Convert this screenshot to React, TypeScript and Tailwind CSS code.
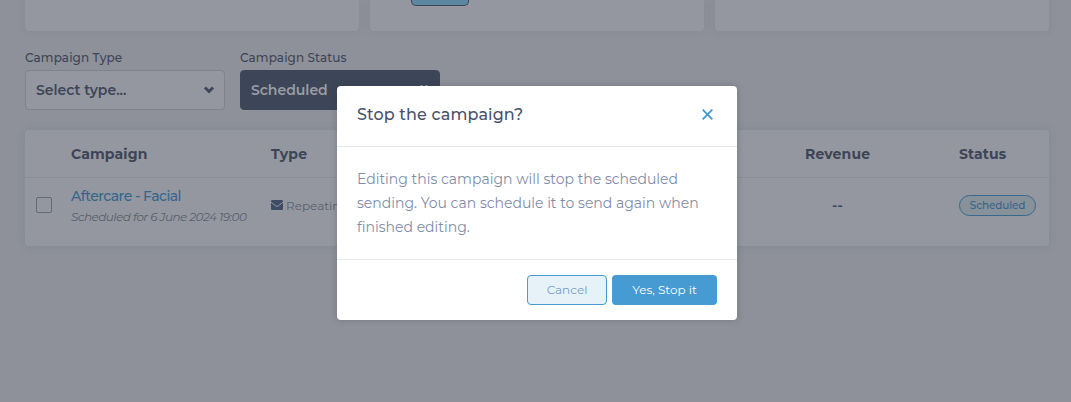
import React from 'react'
import classNames from 'clsx'

interface SelectProps {
    label: string;
    value: string;
    dark?: boolean;
}

interface Campaign {
    name: string;
    note: string;
    type: string;
    revenue: string;
    status: string;
}

const campaigns: Campaign[] = [
    {
        name: 'Aftercare - Facial',
        note: 'Scheduled for 6 June 2024 19:00',
        type: 'Repeating',
        revenue: '--',
        status: 'Scheduled',
    },
]

function Chevron() {
    return (
        <svg className='h-[8px] w-[10px]' viewBox='0 0 10 8' fill='currentColor'>
            <path d='M0 2.4 1.9.5 5 3.6 8.1.5 10 2.4 5 7.4z' />
        </svg>
    )
}

function Clear() {
    return (
        <svg className='h-[11px] w-[10px]' viewBox='0 0 10 11' fill='none' stroke='currentColor' strokeWidth='2.4'>
            <path d='M2 .2 8 10.8M8 .2 2 10.8' />
        </svg>
    )
}

function Select({ label, value, dark }: SelectProps) {
    return (
        <div className='w-[200px]'>
            <label className='block h-[20px] whitespace-nowrap text-[12px] font-medium leading-[16px] tracking-[0.1px] text-[#3d4457]'>{label}</label>
            <div className={classNames(
                'flex h-[40px] items-center justify-between rounded-[4px] border pl-[10px] pr-[10px] text-[14px] font-semibold',
                dark ? 'border-[#3d4658] bg-[#3d4658] text-[#9a9da5]' : 'border-[#7f838f] bg-[#94979f] text-[#3d4658]'
            )}>
                <span>{value}</span>
                {dark ? <Clear /> : <Chevron />}
            </div>
        </div>
    )
}

function StatCards() {
    return (
        <div className='grid h-[31px] grid-cols-3 gap-[11px]'>
            <div className='rounded-b-[4px] bg-[#94979f] shadow-[0_0_8px_rgba(61,70,88,0.09)]'></div>
            <div className='rounded-b-[4px] bg-[#94979f] pl-[41px] shadow-[0_0_8px_rgba(61,70,88,0.09)]'>
                <div className='h-[5.5px] w-[58px] rounded-b-[5px] border border-t-0 border-[#3d4658] bg-[#5d87a0]'></div>
            </div>
            <div className='rounded-b-[4px] bg-[#94979f] shadow-[0_0_8px_rgba(61,70,88,0.09)]'></div>
        </div>
    )
}

function CampaignTable() {
    return (
        <div className='mt-[20px] h-[116px] rounded-[4px] bg-[#94979f] shadow-[0_0_10px_rgba(61,70,88,0.12)]'>
            <div className='flex h-[48px] items-center border-b border-[#8a8d97] pl-[46px] pt-[2px] text-[14px] font-bold tracking-[0.15px] text-[#3d4457]'>
                <div className='w-[200px]'>Campaign</div>
                <div className='w-[534px]'>Type</div>
                <div className='w-[154px]'>Revenue</div>
                <div>Status</div>
            </div>
            {campaigns.map((c) => (
                <div key={c.name} className='flex h-[54px] items-center pl-[11px]'>
                    <div className='mr-[19px] size-[16px] rounded-[2px] border border-[#666b79]'></div>
                    <div className='w-[200px] whitespace-nowrap pt-[3px]'>
                        <div className='text-[14px] font-medium leading-[20px] tracking-[-0.52px] text-[#37658a]'>{c.name}</div>
                        <div className='text-[12px] italic leading-[21px] tracking-[-0.54px] text-[#595f6f]'>{c.note}</div>
                    </div>
                    <div className='flex w-[561px] items-center gap-[3px] text-[12px] text-[#595f6f]'>
                        <svg className='h-[10px] w-[12px]' viewBox='0 0 12 10'>
                            <rect width='12' height='10' rx='1.2' fill='#3d4b63' />
                            <path d='M0 2.2 4.6 5.8Q6 6.8 7.4 5.8L12 2.2' fill='none' stroke='#94979f' />
                        </svg>
                        <span className='pt-[2px]'>{c.type}</span>
                    </div>
                    <div className='w-[127px] text-[14px] font-semibold text-[#3d4457]'>{c.revenue}</div>
                    <div className='flex h-[21px] w-[77px] items-center justify-center rounded-full border border-[#38688c] bg-[#87919a] pt-[2px] text-[10.5px] font-medium tracking-[-0.15px] text-[#37658a]'>{c.status}</div>
                </div>
            ))}
        </div>
    )
}

function StopModal() {
    return (
        <div className='absolute left-[337px] top-[86px] w-[400px] rounded-[4px] bg-white shadow-[0_0_6px_rgba(40,48,64,0.25)]'>
            <div className='flex h-[61px] items-center justify-between border-b border-[#e6e8ec] pb-[3px] pl-[20px] pr-[24px]'>
                <h2 className='text-[16px] font-medium tracking-[0.13px] text-[#48526b]'>Stop the campaign?</h2>
                <svg className='size-[11px]' viewBox='0 0 11 11' fill='none' stroke='#3f9bd5' strokeWidth='1.8'>
                    <path d='M.7.7 10.3 10.3M10.3.7.7 10.3' />
                </svg>
            </div>
            <div className='h-[112px] whitespace-nowrap px-[20px] pt-[20px] text-[14px] leading-[24px] text-[#7f8ca8]'>
                <p>Editing this campaign will stop the scheduled</p>
                <p>sending. You can schedule it to send again when</p>
                <p>finished editing.</p>
            </div>
            <div className='flex h-[61px] justify-end gap-[5px] border-t border-[#e6e8ec] pr-[20px] pt-[15px] text-[12px]'>
                <button className='h-[30px] w-[80px] rounded-[4px] border border-[#469bd3] bg-[#e6f2f8] text-[#789cc9]'>Cancel</button>
                <button className='h-[30px] w-[105px] rounded-[4px] bg-[#469bd3] text-white'>Yes, Stop it</button>
            </div>
        </div>
    )
}

export default function App() {
    return (
        <div className="relative h-[402px] w-[1071px] overflow-hidden bg-[#8e9199] pl-[25px] pr-[22px] font-['Montserrat','Inter',sans-serif]">
            <StatCards />
            <div className='mt-[19px] flex gap-[15px]'>
                <Select label='Campaign Type' value='Select type...' />
                <Select label='Campaign Status' value='Scheduled' dark />
            </div>
            <CampaignTable />
            <StopModal />
        </div>
    )
}
